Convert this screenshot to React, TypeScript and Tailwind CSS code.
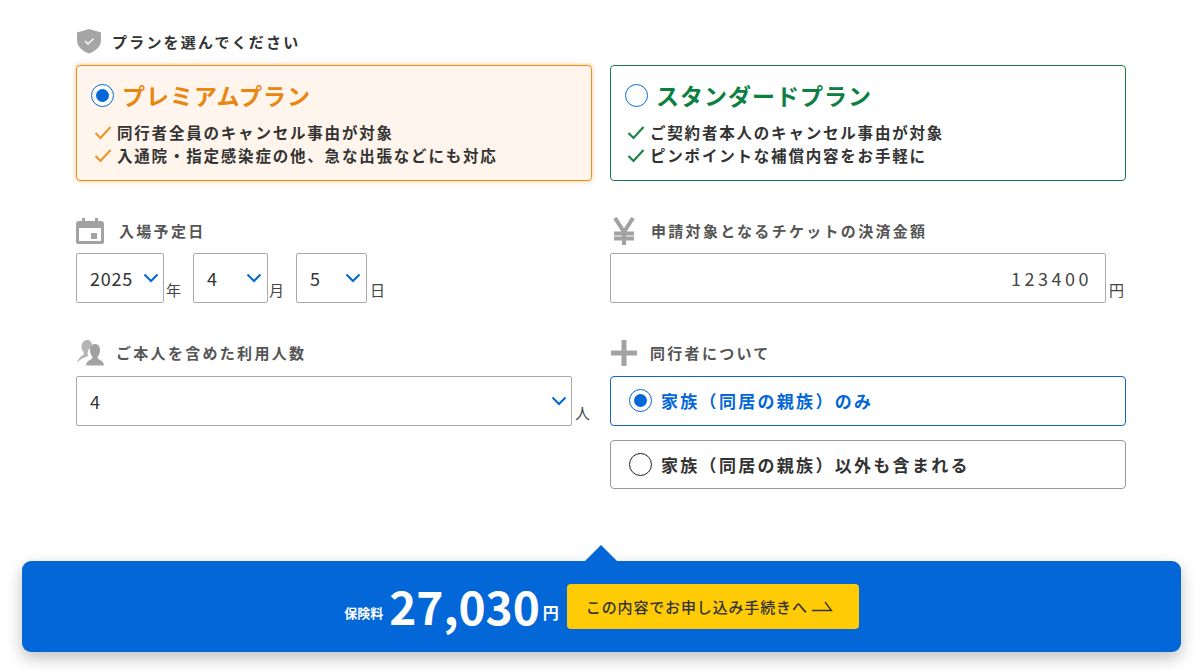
import React from "react";

const font = { fontFamily: '"Noto Sans CJK JP", "Noto Sans", sans-serif' };

function Radio({ on, dark }: { on?: boolean; dark?: boolean }) {
  return (
    <span
      className={`flex h-[23px] w-[23px] shrink-0 items-center justify-center rounded-full border bg-white ${
        dark ? "border-[#222222]" : "border-[#0367d8]"
      }`}
    >
      {on && <span className="h-[13px] w-[13px] rounded-full bg-[#0367d8]" />}
    </span>
  );
}

function Check({ color }: { color: string }) {
  return (
    <svg width="18" height="15" viewBox="0 0 18 15" className="shrink-0">
      <path d="M1.5 8 L6.500 13 L16.500 2" fill="none" stroke={color} strokeWidth="2.200" />
    </svg>
  );
}

function Chevron() {
  return (
    <svg width="16" height="10" viewBox="0 0 16 10" className="shrink-0">
      <path d="M1.5 1.5 L8 8 L14.5 1.5" fill="none" stroke="#0367d8" strokeWidth="2" />
    </svg>
  );
}

function Label({ icon, text, gap }: { icon: React.ReactNode; text: string; gap: string }) {
  return (
    <div className={`flex h-[28px] items-center ${gap}`}>
      <span className="flex w-[28px] shrink-0 items-center justify-center">{icon}</span>
      <span className="pb-[2px] text-[15px] font-bold leading-none tracking-[2.3px] text-[#555555]">{text}</span>
    </div>
  );
}

function Select({ value, width, pad, chevronRight }: { value: string; width: string; pad: string; chevronRight: string }) {
  return (
    <div className={`flex h-[50px] items-center justify-between rounded-[2px] border border-[#aaaaaa] bg-white ${width} ${pad} ${chevronRight}`}>
      <span className="text-[18px] leading-none tracking-[0.8px] text-[#333333]">{value}</span>
      <Chevron />
    </div>
  );
}

function Unit({ text, ml }: { text: string; ml: string }) {
  return <span className={`self-end pb-[3px] text-[15px] leading-[20px] text-[#444444] ${ml}`}>{text}</span>;
}

function PlanCard({
  selected,
  title,
  lines,
  titleColor,
  checkColor,
  shell,
  checkPad,
}: {
  selected?: boolean;
  title: string;
  lines: string[];
  titleColor: string;
  checkColor: string;
  shell: string;
  checkPad: string;
}) {
  return (
    <div className={`h-[116px] rounded-[4px] border px-[14px] pt-[16px] ${shell}`}>
      <div className="flex h-[26px] items-center gap-[8px]">
        <Radio on={selected} />
        <span className={`text-[23px] font-bold leading-none tracking-[1px] ${titleColor}`}>{title}</span>
      </div>
      <div className={`mt-[13px] flex flex-col ${checkPad}`}>
        {lines.map((l) => (
          <div key={l} className="flex h-[23px] items-center gap-[5px]">
            <Check color={checkColor} />
            <span className="text-[15.5px] font-bold leading-none tracking-[1.8px] text-[#333333]">{l}</span>
          </div>
        ))}
      </div>
    </div>
  );
}

export default function App() {
  return (
    <div className="h-[670px] w-[1200px] overflow-hidden bg-white" style={font}>
      <div className="ml-[76px] w-[1050px] pt-[26px]">
        <div className="flex h-[30px] items-center gap-[10px]">
          <svg width="26" height="26" viewBox="0 0 26 26" className="shrink-0">
            <path d="M13 1 L25 4.500 V12 C25 18.500 20 23 13 25.500 C6 23 1 18.500 1 12 V4.500 Z" fill="#a5a5a5" />
            <path d="M9 13 L12 16 L17.500 10.500" fill="none" stroke="#ffffff" strokeWidth="1.300" />
          </svg>
          <span className="text-[15px] font-bold leading-none tracking-[2.2px] text-[#333333]">プランを選んでください</span>
        </div>
        <div className="mt-[9px] grid grid-cols-2 gap-x-[18px]">
          <PlanCard
            selected
            title="プレミアムプラン"
            lines={["同行者全員のキャンセル事由が対象", "入通院・指定感染症の他、急な出張などにも対応"]}
            titleColor="text-[#e8860f]"
            checkColor="#e8962d"
            shell="border-[#ea9020] bg-[#fff5ec] shadow-[0_0_5px_rgba(234,144,32,0.55)]"
            checkPad="pl-[3px]"
          />
          <PlanCard
            title="スタンダードプラン"
            lines={["ご契約者本人のキャンセル事由が対象", "ピンポイントな補償内容をお手軽に"]}
            titleColor="text-[#0b8040]"
            checkColor="#1c8447"
            shell="border-[#1b7a4b] bg-white"
            checkPad="pl-[2px]"
          />
        </div>

        <div className="mt-[36px] grid grid-cols-2 gap-x-[18px]">
          <div>
            <Label
              gap="gap-[15px]"
              text="入場予定日"
              icon={
                <svg width="28" height="28" viewBox="0 0 28 28">
                  <path d="M6 1h3v3h10V1h3v3h3a3 3 0 0 1 3 3v18a2 2 0 0 1-2 2H2a2 2 0 0 1-2-2V7a3 3 0 0 1 3-3h3z" fill="#a2a2a2" />
                  <rect x="3" y="11" width="22" height="13" fill="#ffffff" />
                  <rect x="15" y="16" width="6" height="6" fill="#a2a2a2" />
                </svg>
              }
            />
            <div className="mt-[8px] flex items-stretch">
              <Select value="2025" width="w-[88px]" pad="pl-[13px]" chevronRight="pr-[4px]" />
              <Unit text="年" ml="ml-[2px] mr-[12px]" />
              <Select value="4" width="w-[75px]" pad="pl-[13px]" chevronRight="pr-[5px]" />
              <Unit text="月" ml="ml-[1px] mr-[12px]" />
              <Select value="5" width="w-[71px]" pad="pl-[13px]" chevronRight="pr-[5px]" />
              <Unit text="日" ml="ml-[3px]" />
            </div>
          </div>
          <div>
            <Label
              gap="gap-[13px]"
              text="申請対象となるチケットの決済金額"
              icon={
                <svg width="28" height="28" viewBox="0 0 28 28">
                  <path d="M5 1 L14 15 L23 1 M4 16.500 H24 M4 21.500 H24 M14 14 V28" fill="none" stroke="#a2a2a2" strokeWidth="4" />
                </svg>
              }
            />
            <div className="mt-[8px] flex items-stretch">
              <div className="flex h-[50px] w-[496px] items-center justify-end rounded-[2px] border border-[#aaaaaa] bg-white pr-[13px]">
                <span className="text-[18px] leading-none tracking-[3.5px] text-[#444444]">123400</span>
              </div>
              <Unit text="円" ml="ml-[3px]" />
            </div>
          </div>
        </div>

        <div className="mt-[36px] grid grid-cols-2 gap-x-[18px]">
          <div>
            <Label
              gap="gap-[12px]"
              text="ご本人を含めた利用人数"
              icon={
                <svg width="28" height="28" viewBox="0 0 28 28">
                  <path d="M11 1c3 0 5 2 5 5 0 1-.5 2-1 3-3 1-4 4-3 8l-2 1c-3 1-6 2-9 6 1-4 3-6 6-8 1-1 1-2 0-4-1-1-1.500-2-1.500-4C5.500 4 8 1 11 1z" fill="#b5b5b5" />
                  <path d="M19 5c3 0 5 2.500 5 6 0 3-1 5-2 6-1 2 0 3 2 4 2 .7 3.500 2 4 5.500H10c.5-3.500 2-4.800 4-5.500 2-1 3-2 2-4-1-1-2-3-2-6 0-3.500 2-6 5-6z" fill="#a2a2a2" />
                </svg>
              }
            />
            <div className="mt-[9px] flex items-stretch">
              <Select value="4" width="w-[496px]" pad="pl-[13px]" chevronRight="pr-[4px]" />
              <Unit text="人" ml="ml-[3px]" />
            </div>
          </div>
          <div>
            <Label
              gap="gap-[12px]"
              text="同行者について"
              icon={
                <svg width="28" height="28" viewBox="0 0 28 28">
                  <path d="M14 1V27M1 14H27" fill="none" stroke="#a2a2a2" strokeWidth="5" />
                </svg>
              }
            />
            <div className="mt-[9px] flex h-[50px] items-center gap-[9px] rounded-[4px] border border-[#1565c0] bg-white pl-[18px] pb-[1px]">
              <Radio on />
              <span className="text-[17px] font-bold leading-none tracking-[2.3px] text-[#0367d8]">家族（同居の親族）のみ</span>
            </div>
            <div className="mt-[14px] flex h-[49px] items-center gap-[9px] rounded-[4px] border border-[#999999] bg-white pl-[18px] pb-[1px]">
              <Radio dark />
              <span className="text-[17px] font-bold leading-none tracking-[2.3px] text-[#333333]">家族（同居の親族）以外も含まれる</span>
            </div>
          </div>
        </div>
      </div>

      <div className="relative ml-[22px] mt-[72px] flex h-[91px] w-[1159px] items-center justify-center rounded-[9px] bg-[#0367d8] shadow-[0_6px_16px_rgba(0,0,0,0.25)]">
        <span className="absolute left-[563px] top-[-16px] h-[16px] w-[32px] bg-[#0367d8] [clip-path:polygon(50%_0,100%_100%,0_100%)]" />
        <span className="mt-[12px] text-[13px] font-bold leading-none text-white">保険料</span>
        <span className="mb-[3px] ml-[6px] text-[46px] font-bold leading-none text-white">27,030</span>
        <span className="ml-[3px] mt-[10px] text-[16px] font-bold leading-none text-white">円</span>
        <div className="mb-[1px] ml-[8px] flex h-[45px] w-[292px] items-center gap-[3px] rounded-[4px] bg-[#ffcb05] pl-[19px]">
          <span className="text-[15px] font-medium leading-none tracking-[0.85px] text-[#333333]">この内容でお申し込み手続きへ</span>
          <svg width="22" height="12" viewBox="0 0 22 12" className="shrink-0">
            <path d="M1 10.500 H20.500 L14 2" fill="none" stroke="#333333" strokeWidth="1.300" />
          </svg>
        </div>
      </div>
    </div>
  );
}
